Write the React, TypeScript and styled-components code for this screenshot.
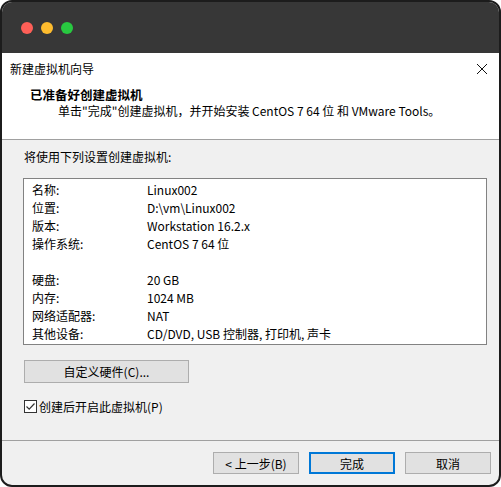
import React from "react";
import styled, { createGlobalStyle } from "styled-components";

const Global = createGlobalStyle`
  html, body { margin: 0; padding: 0; background: #ffffff; }
  body { font-family: "Noto Sans CJK SC", "Noto Sans", sans-serif; }
  * { box-sizing: border-box; }
`;

const Window = styled.div`
  width: 501px;
  height: 487px;
  border: 2px solid #1c1c1c;
  border-radius: 12px;
  overflow: hidden;
  display: flex;
  flex-direction: column;
  background: #f0f0f0;
  font-family: "Noto Sans CJK SC", "Noto Sans", sans-serif;
  font-size: 12px;
  color: #000;
`;

const TitleBar = styled.div`
  height: 51px;
  flex: none;
  background: #373737;
  display: flex;
  align-items: center;
  gap: 8px;
  padding-left: 19px;
`;

const Light = styled.span<{ $c: string }>`
  width: 12px;
  height: 12px;
  border-radius: 50%;
  background: ${(p) => p.$c};
`;

const Header = styled.div`
  background: #ffffff;
  height: 87px;
  flex: none;
  border-bottom: 1px solid #a0a0a0;
  display: flex;
  flex-direction: column;
`;

const CaptionRow = styled.div`
  display: flex;
  justify-content: space-between;
  align-items: center;
  height: 31px;
  padding: 0 11px 0 8px;
  font-size: 12px;
`;

const Close = styled.svg`
  width: 12px;
  height: 12px;
`;

const HeadTitle = styled.div`
  font-weight: bold;
  font-size: 12.5px;
  padding-left: 28px;
  margin-top: 2px;
  line-height: 17px;
`;

const HeadSub = styled.div`
  padding-left: 56px;
  line-height: 16px;
  font-size: 12px;
`;

const Body = styled.div`
  flex: 1;
  display: flex;
  flex-direction: column;
  padding: 8px 12px 0 21px;
`;

const Intro = styled.div`
  line-height: 18px;
  padding-left: 1px;
`;

const ListBox = styled.div`
  margin-top: 12px;
  height: 167px;
  background: #fff;
  border: 1px solid #828282;
  padding: 2px 0 0 8px;
  display: grid;
  grid-template-columns: 115px 1fr;
  grid-auto-rows: 18px;
  align-items: center;
`;

const Cell = styled.div`
  white-space: nowrap;
  line-height: 18px;
`;

const Spacer = styled.div`
  grid-column: 1 / span 2;
`;

const HwButton = styled.div`
  margin-top: 15px;
  margin-left: 1px;
  width: 165px;
  height: 23px;
  background: #e1e1e1;
  border: 1px solid #adadad;
  display: flex;
  align-items: center;
  justify-content: center;
`;

const CheckRow = styled.div`
  margin-top: 15px;
  display: flex;
  align-items: center;
  gap: 2px;
  margin-left: 1px;
`;

const Box = styled.svg`
  width: 13px;
  height: 13px;
`;

const Footer = styled.div`
  height: 45px;
  flex: none;
  border-top: 1px solid #a0a0a0;
  display: flex;
  justify-content: flex-end;
  gap: 10px;
  padding: 11px 8px 0 0;
`;

const Btn = styled.div<{ $primary?: boolean }>`
  width: 86px;
  height: 22px;
  background: #e1e1e1;
  border: ${(p) => (p.$primary ? "2px solid #0078d7" : "1px solid #adadad")};
  display: flex;
  align-items: center;
  justify-content: center;
`;

const rows: [string, string][] = [
  ["名称:", "Linux002"],
  ["位置:", "D:\\vm\\Linux002"],
  ["版本:", "Workstation 16.2.x"],
  ["操作系统:", "CentOS 7 64 位"],
];
const rows2: [string, string][] = [
  ["硬盘:", "20 GB"],
  ["内存:", "1024 MB"],
  ["网络适配器:", "NAT"],
  ["其他设备:", "CD/DVD, USB 控制器, 打印机, 声卡"],
];

export default function App() {
  return (
    <>
      <Global />
      <Window>
        <TitleBar>
          <Light $c="#fe5f57" />
          <Light $c="#febc2e" />
          <Light $c="#28c840" />
        </TitleBar>
        <Header>
          <CaptionRow>
            <span>新建虚拟机向导</span>
            <Close viewBox="0 0 12 12">
              <path d="M1 1 L11 11 M11 1 L1 11" stroke="#111" strokeWidth="1" fill="none" />
            </Close>
          </CaptionRow>
          <HeadTitle>已准备好创建虚拟机</HeadTitle>
          <HeadSub>单击"完成"创建虚拟机，并开始安装 CentOS 7 64 位 和 VMware Tools。</HeadSub>
        </Header>
        <Body>
          <Intro>将使用下列设置创建虚拟机:</Intro>
          <ListBox>
            {rows.map(([k, v]) => (
              <React.Fragment key={k}>
                <Cell>{k}</Cell>
                <Cell>{v}</Cell>
              </React.Fragment>
            ))}
            <Spacer />
            {rows2.map(([k, v]) => (
              <React.Fragment key={k}>
                <Cell>{k}</Cell>
                <Cell>{v}</Cell>
              </React.Fragment>
            ))}
          </ListBox>
          <HwButton>自定义硬件(C)...</HwButton>
          <CheckRow>
            <Box viewBox="0 0 13 13">
              <rect x="0.5" y="0.5" width="12" height="12" fill="#fff" stroke="#333" />
              <path d="M2.5 6.5 L5.2 9.2 L10.5 3.5" stroke="#333" strokeWidth="1.2" fill="none" />
            </Box>
            <span>创建后开启此虚拟机(P)</span>
          </CheckRow>
        </Body>
        <Footer>
          <Btn>&lt; 上一步(B)</Btn>
          <Btn $primary>完成</Btn>
          <Btn>取消</Btn>
        </Footer>
      </Window>
    </>
  );
}
